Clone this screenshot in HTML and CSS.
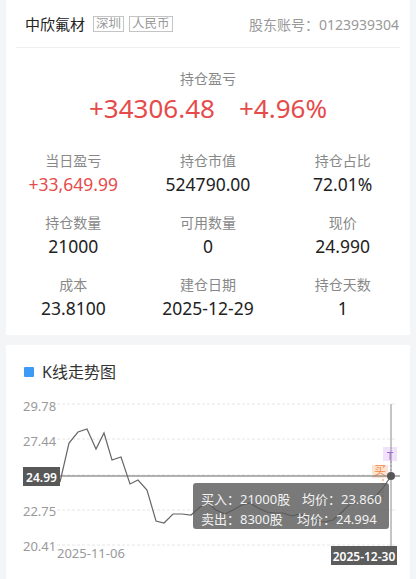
FILE: index.html
```html
<!DOCTYPE html>
<html lang="zh-CN">
<head>
  <meta charset="UTF-8" />
  <meta name="viewport" content="width=device-width, initial-scale=1.0"/>
  <title>持仓详情</title>
  <link rel="stylesheet" href="styles.css">
</head>
<body>
  <div class="card info">
    <div class="head">
      <span class="name">中欣氟材</span>
      <span class="tag">深圳</span>
      <span class="tag">人民币</span>
      <span class="account">股东账号：0123939304</span>
    </div>

    <div class="summary">
      <div class="label">持仓盈亏</div>
      <div class="big red">
        <span>+34306.48</span>
        <span>+4.96%</span>
      </div>
    </div>

    <div class="grid">
      <div class="cell"><div class="label">当日盈亏</div><div class="value red">+33,649.99</div></div>
      <div class="cell"><div class="label">持仓市值</div><div class="value">524790.00</div></div>
      <div class="cell"><div class="label">持仓占比</div><div class="value">72.01%</div></div>
      <div class="cell"><div class="label">持仓数量</div><div class="value">21000</div></div>
      <div class="cell"><div class="label">可用数量</div><div class="value">0</div></div>
      <div class="cell"><div class="label">现价</div><div class="value">24.990</div></div>
      <div class="cell"><div class="label">成本</div><div class="value">23.8100</div></div>
      <div class="cell"><div class="label">建仓日期</div><div class="value">2025-12-29</div></div>
      <div class="cell"><div class="label">持仓天数</div><div class="value">1</div></div>
    </div>
  </div>

  <div class="card chart">
    <div class="title"><span class="dot"></span>K线走势图</div>

    <svg class="kline" width="407" height="189" viewBox="6 390 407 189">
      <g class="grid-lines">
        <line x1="57" y1="404" x2="397" y2="404"/>
        <line x1="57" y1="439" x2="397" y2="439"/>
        <line x1="57" y1="475" x2="397" y2="475"/>
        <line x1="57" y1="510" x2="397" y2="510"/>
        <line x1="57" y1="545" x2="397" y2="545"/>
      </g>
      <g class="axis">
        <text x="23" y="406">29.78</text>
        <text x="23" y="441">27.44</text>
        <text x="23" y="511">22.75</text>
        <text x="23" y="546">20.41</text>
        <text x="57" y="553">2025-11-06</text>
      </g>

      <polyline class="price" points="60,482 69,443 78,432 87,429 96,449 104,433 112,460 121,457 130,484 138,480 147,490 156,521 164,523 173,514 182,514 191,515 200,507 208,503 216,510 225,514 233,510 242,505 250,503 258,508 267,512 275,513 283,513 292,516 300,514 308,518 317,521 325,522 333,520 342,512 350,504 358,503 367,502 375,497 383,488 391,476"/>

      <!-- trade markers -->
      <rect x="383" y="447" width="14" height="14" fill="#f0e2fc"/>
      <text class="mark-sell" x="390" y="455">T</text>
      <line class="dash-sell" x1="391" y1="461" x2="391" y2="476"/>
      <rect x="372" y="465" width="16" height="13" fill="#fde4d2"/>
      <text class="mark-buy" x="380" y="470">买</text>
      <line class="dash-buy" x1="383" y1="479" x2="383" y2="500"/>

      <!-- crosshair -->
      <line class="cross" x1="60" y1="476" x2="400" y2="476"/>
      <line class="cross-v" x1="391" y1="404" x2="391" y2="546"/>
      <circle cx="391" cy="476" r="4" fill="#555"/>

      <rect x="23" y="467" width="37" height="19" fill="#585858"/>
      <text class="tag-text" x="41.5" y="477">24.99</text>
      <rect x="331" y="546" width="66" height="19" fill="#5c5c5c"/>
      <text class="tag-text" x="364" y="556">2025-12-30</text>

      <!-- tooltip -->
      <rect x="193" y="483" width="196" height="46" rx="3" fill="rgba(88,88,88,0.8)"/>
      <text class="tip" y="499"><tspan x="201">买入：21000股</tspan><tspan x="302">均价：23.860</tspan></text>
      <text class="tip" y="519"><tspan x="201">卖出：8300股</tspan><tspan x="297">均价：24.994</tspan></text>
    </svg>
  </div>
</body>
</html>
```

FILE: styles.css
```css
body {
  margin: 0;
  background: #f4f5f7;
  font-family: "Noto Sans", "Noto Sans CJK SC", sans-serif;
  color: #222;
}
.card {
  background: #fff;
  margin: 0 6px;
}
.info {
  padding: 0 10px 15px;
}
.head {
  display: flex;
  align-items: center;
  height: 47px;
  padding: 0 1px 0 9px;
  border-bottom: 1px solid #eee;
}
.name {
  font-size: 15px;
  color: #222;
  margin-right: 8px;
}
.tag {
  font-size: 12.5px;
  line-height: 14px;
  color: #999;
  border: 1px solid #c4c4c4;
  padding: 0 2px;
  margin-right: 5px;
}
.account {
  margin-left: auto;
  font-size: 14px;
  color: #999;
}
.summary {
  text-align: center;
  padding-top: 21px;
}
.label {
  font-size: 14px;
  line-height: 20px;
  color: #888;
}
.big {
  display: flex;
  justify-content: center;
  gap: 24px;
  font-size: 26px;
  line-height: 32px;
  margin-top: 3px;
}
.red {
  color: #e64b4b;
}
.grid {
  display: grid;
  grid-template-columns: repeat(3, 1fr);
  row-gap: 17px;
  margin: 27px -10px 0;
  text-align: center;
}
.value {
  font-size: 17.5px;
  line-height: 24px;
  margin-top: 1px;
}
.chart {
  margin-top: 10px;
  padding-top: 16px;
}
.title {
  display: flex;
  align-items: center;
  font-size: 16px;
  line-height: 22px;
  color: #333;
  padding-left: 18px;
  margin-bottom: 7px;
}
.dot {
  width: 10px;
  height: 10px;
  background: #3d9bf7;
  border-radius: 1px;
  margin-right: 8px;
}
.kline {
  display: block;
}
.grid-lines line {
  stroke: #e6e6e6;
  stroke-width: 1;
  stroke-dasharray: 3 2;
}
.axis text {
  font-size: 13px;
  fill: #999;
  dominant-baseline: central;
}
.price {
  fill: none;
  stroke: #666;
  stroke-width: 1.2;
}
.cross {
  stroke: #666;
  stroke-width: 1;
}
.cross-v {
  stroke: #8a8a8a;
  stroke-width: 1;
}
.dash-sell {
  stroke: #b07ce8;
  stroke-dasharray: 2 2;
}
.dash-buy {
  stroke: #f08a4b;
  stroke-dasharray: 2 2;
}
.mark-sell {
  font-size: 11px;
  fill: #9b5de0;
  text-anchor: middle;
  dominant-baseline: central;
}
.mark-buy {
  font-size: 12px;
  fill: #f08a4b;
  text-anchor: middle;
  dominant-baseline: central;
}
.tag-text {
  font-size: 12px;
  font-weight: 600;
  fill: #fff;
  text-anchor: middle;
  dominant-baseline: central;
}
.tip {
  font-size: 13px;
  fill: #f2f2f2;
  dominant-baseline: central;
}
```
